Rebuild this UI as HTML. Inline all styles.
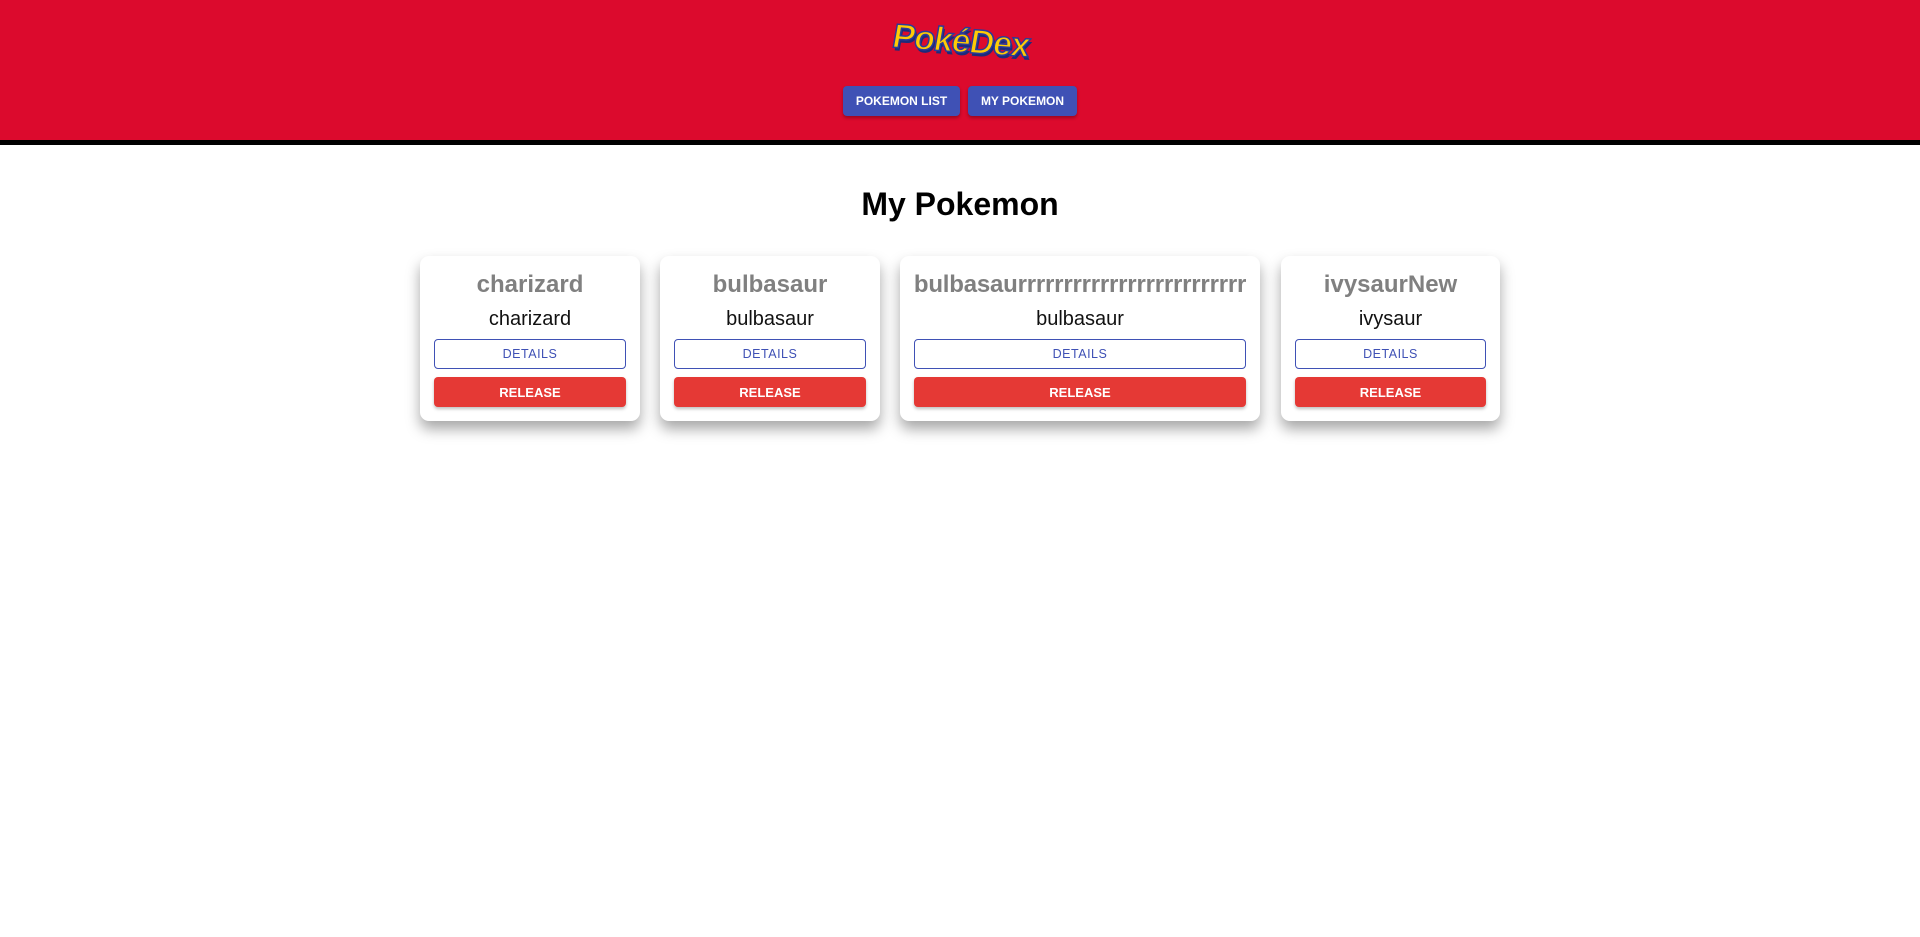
<!DOCTYPE html>
<html><head><meta charset="utf-8"><style>
*{margin:0;padding:0;box-sizing:border-box}
body{width:1920px;height:937px;background:#fff;font-family:"Liberation Sans",sans-serif;position:relative;overflow:hidden}
.hdr{position:absolute;left:0;top:0;width:1920px;background:#dc0a2d;border-bottom:5px solid #000;height:145px}
.logo{position:absolute;left:890px;top:22px;width:140px;height:50px;font:bold 34px "Liberation Sans",sans-serif;color:#ffcb05;-webkit-text-stroke:1.5px #2a3b9a;text-shadow:2px 3px 0 #1d2b7a;transform:rotate(4deg) skewX(-6deg);letter-spacing:-1px;text-align:center}
.nb{position:absolute;top:86px;height:30px;background:#3f51b5;color:#fff;font:bold 12px "Liberation Sans",sans-serif;border-radius:4px;display:flex;align-items:center;justify-content:center;box-shadow:0 2px 3px rgba(0,0,0,.3)}
h1{position:absolute;top:186px;left:0;width:1920px;text-align:center;font-size:32px;font-weight:bold;color:#000}
.card{position:absolute;top:256px;height:165px;background:#fff;border-radius:9px;box-shadow:0 8px 14px rgba(0,0,0,.35)}
.t{position:absolute;top:15px;left:0;width:100%;text-align:center;font-size:24px;font-weight:bold;color:#808080;white-space:nowrap}
.s{position:absolute;top:52px;left:0;width:100%;text-align:center;font-size:20px;color:#111}
.d{position:absolute;top:83px;left:14px;right:14px;height:30px;border:1.5px solid #3f51b5;border-radius:4px;color:#3f51b5;font-size:12.5px;display:flex;align-items:center;justify-content:center;letter-spacing:.5px}
.r{position:absolute;top:121px;left:14px;right:14px;height:30px;background:#e53935;border-radius:4px;color:#fff;font-size:13px;font-weight:bold;display:flex;align-items:center;justify-content:center;box-shadow:0 2px 3px rgba(0,0,0,.25)}
</style></head><body>
<div class="hdr"></div>
<div class="logo">PokéDex</div>
<div class="nb" style="left:843px;width:117px">POKEMON LIST</div>
<div class="nb" style="left:968px;width:109px">MY POKEMON</div>
<h1>My Pokemon</h1>
<div class="card" style="left:420px;width:220px"><div class="t">charizard</div><div class="s">charizard</div><div class="d">DETAILS</div><div class="r">RELEASE</div></div>
<div class="card" style="left:660px;width:220px"><div class="t">bulbasaur</div><div class="s">bulbasaur</div><div class="d">DETAILS</div><div class="r">RELEASE</div></div>
<div class="card" style="left:900px;width:360px"><div class="t" style="letter-spacing:-0.2px">bulbasaurrrrrrrrrrrrrrrrrrrrrrrrr</div><div class="s">bulbasaur</div><div class="d">DETAILS</div><div class="r">RELEASE</div></div>
<div class="card" style="left:1281px;width:219px"><div class="t">ivysaurNew</div><div class="s">ivysaur</div><div class="d">DETAILS</div><div class="r">RELEASE</div></div>
</body></html>
